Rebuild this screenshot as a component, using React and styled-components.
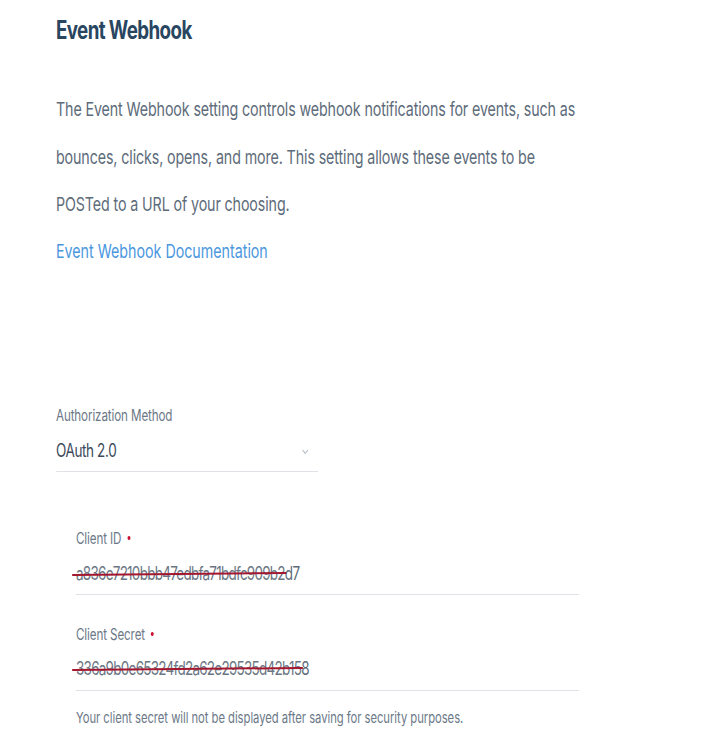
import React from "react";
import styled, { createGlobalStyle } from "styled-components";

const S = 0.75;
const px = (v) => `${(v / S).toFixed(2)}px`;

const Global = createGlobalStyle`
  html, body { margin: 0; padding: 0; background: #ffffff; }
  body { font-family: Inter, "Liberation Sans", sans-serif; -webkit-font-smoothing: antialiased; }
`;

const Page = styled.div`
  width: ${px(708)};
  height: 747px;
  overflow: hidden;
  box-sizing: border-box;
  padding-left: ${px(56)};
  transform: scaleX(${S});
  transform-origin: 0 0;
  display: flex;
  flex-direction: column;
`;

const Heading = styled.h2`
  margin: 15px 0 0;
  font-size: 25px;
  line-height: 30px;
  font-weight: 700;
  color: #294661;
  letter-spacing: -0.8px;
`;

const Paragraph = styled.p`
  margin: 41px 0 0;
  width: ${px(600)};
  font-size: 19px;
  line-height: 47.5px;
  color: #5d6b7a;
  letter-spacing: -0.14px;
  white-space: nowrap;
`;

const DocLink = styled.a`
  display: block;
  font-size: 19px;
  line-height: 46px;
  color: #4b97de;
  text-decoration: none;
`;

const Field = styled.div`
  display: flex;
  flex-direction: column;
  margin-top: ${(p) => p.$top}px;
  margin-left: ${(p) => px(p.$indent || 0)};
  width: ${(p) => px(p.$width)};
`;

const Label = styled.div`
  font-size: 15.5px;
  line-height: 20px;
  color: #6b7887;
  letter-spacing: -0.15px;
  display: flex;
  align-items: center;
`;

const Required = styled.span`
  display: inline-block;
  width: 4px;
  height: 4px;
  border-radius: 50%;
  background: #c8102e;
  margin-left: ${px(6)};
  margin-top: -2px;
`;

const ValueRow = styled.div`
  margin-top: ${(p) => p.$gap}px;
  display: flex;
  align-items: center;
  justify-content: space-between;
  font-size: ${(p) => p.$size}px;
  letter-spacing: ${(p) => p.$track}px;
  line-height: 30px;
  color: #3b4a5a;
  padding-bottom: ${(p) => p.$pad}px;
  border-bottom: 1px solid #dfe2e6;
`;

const Struck = styled.span`
  position: relative;
  color: #6b7684;
  &::after {
    content: "";
    position: absolute;
    left: ${px(-4)};
    right: ${px(-2)};
    top: 52%;
    height: 2px;
    background: #a3182f;
    border-radius: 1px;
    transform: rotate(-0.4deg);
  }
`;

const Plain = styled.span`
  color: #5d6b7a;
`;

const Chevron = styled.svg`
  width: ${px(9)};
  height: 6px;
  margin-right: ${px(8)};
  margin-top: 2px;
`;

const Helper = styled.div`
  margin-top: 17px;
  margin-left: ${px(20)};
  font-size: 15px;
  line-height: 20px;
  color: #6b7887;
  letter-spacing: -0.05px;
`;

export default function App() {
  return (
    <>
      <Global />
      <Page>
        <Heading>Event Webhook</Heading>
        <Paragraph>
          The Event Webhook setting controls webhook notifications for events, such as
          <br />
          bounces, clicks, opens, and more. This setting allows these events to be
          <br />
          POSTed to a URL of your choosing.
        </Paragraph>
        <DocLink href="#">Event Webhook Documentation</DocLink>

        <Field $top={131} $width={262}>
          <Label>Authorization Method</Label>
          <ValueRow $gap={10} $pad={5} $size={18} $track={-0.5}>
            <span>OAuth 2.0</span>
            <Chevron viewBox="0 0 9 6" fill="none">
              <path d="M1 1l3.5 3.5L8 1" stroke="#b5bcc4" strokeWidth="1.2" />
            </Chevron>
          </ValueRow>
        </Field>

        <Field $top={57} $indent={20} $width={503}>
          <Label>
            Client ID<Required />
          </Label>
          <ValueRow $gap={10} $pad={5} $size={18} $track={-1}>
            <span>
              <Struck>a836e7210bbb47edbfa71bdfc909b2</Struck>
              <Plain>d7</Plain>
            </span>
          </ValueRow>
        </Field>

        <Field $top={30} $indent={20} $width={503}>
          <Label>
            Client Secret<Required />
          </Label>
          <ValueRow $gap={9} $pad={6} $size={18} $track={-1}>
            <span>
              <Struck>336a9b0e65324fd2a62e29535d42b15</Struck>
              <Plain>8</Plain>
            </span>
          </ValueRow>
        </Field>

        <Helper>Your client secret will not be displayed after saving for security purposes.</Helper>
      </Page>
    </>
  );
}
